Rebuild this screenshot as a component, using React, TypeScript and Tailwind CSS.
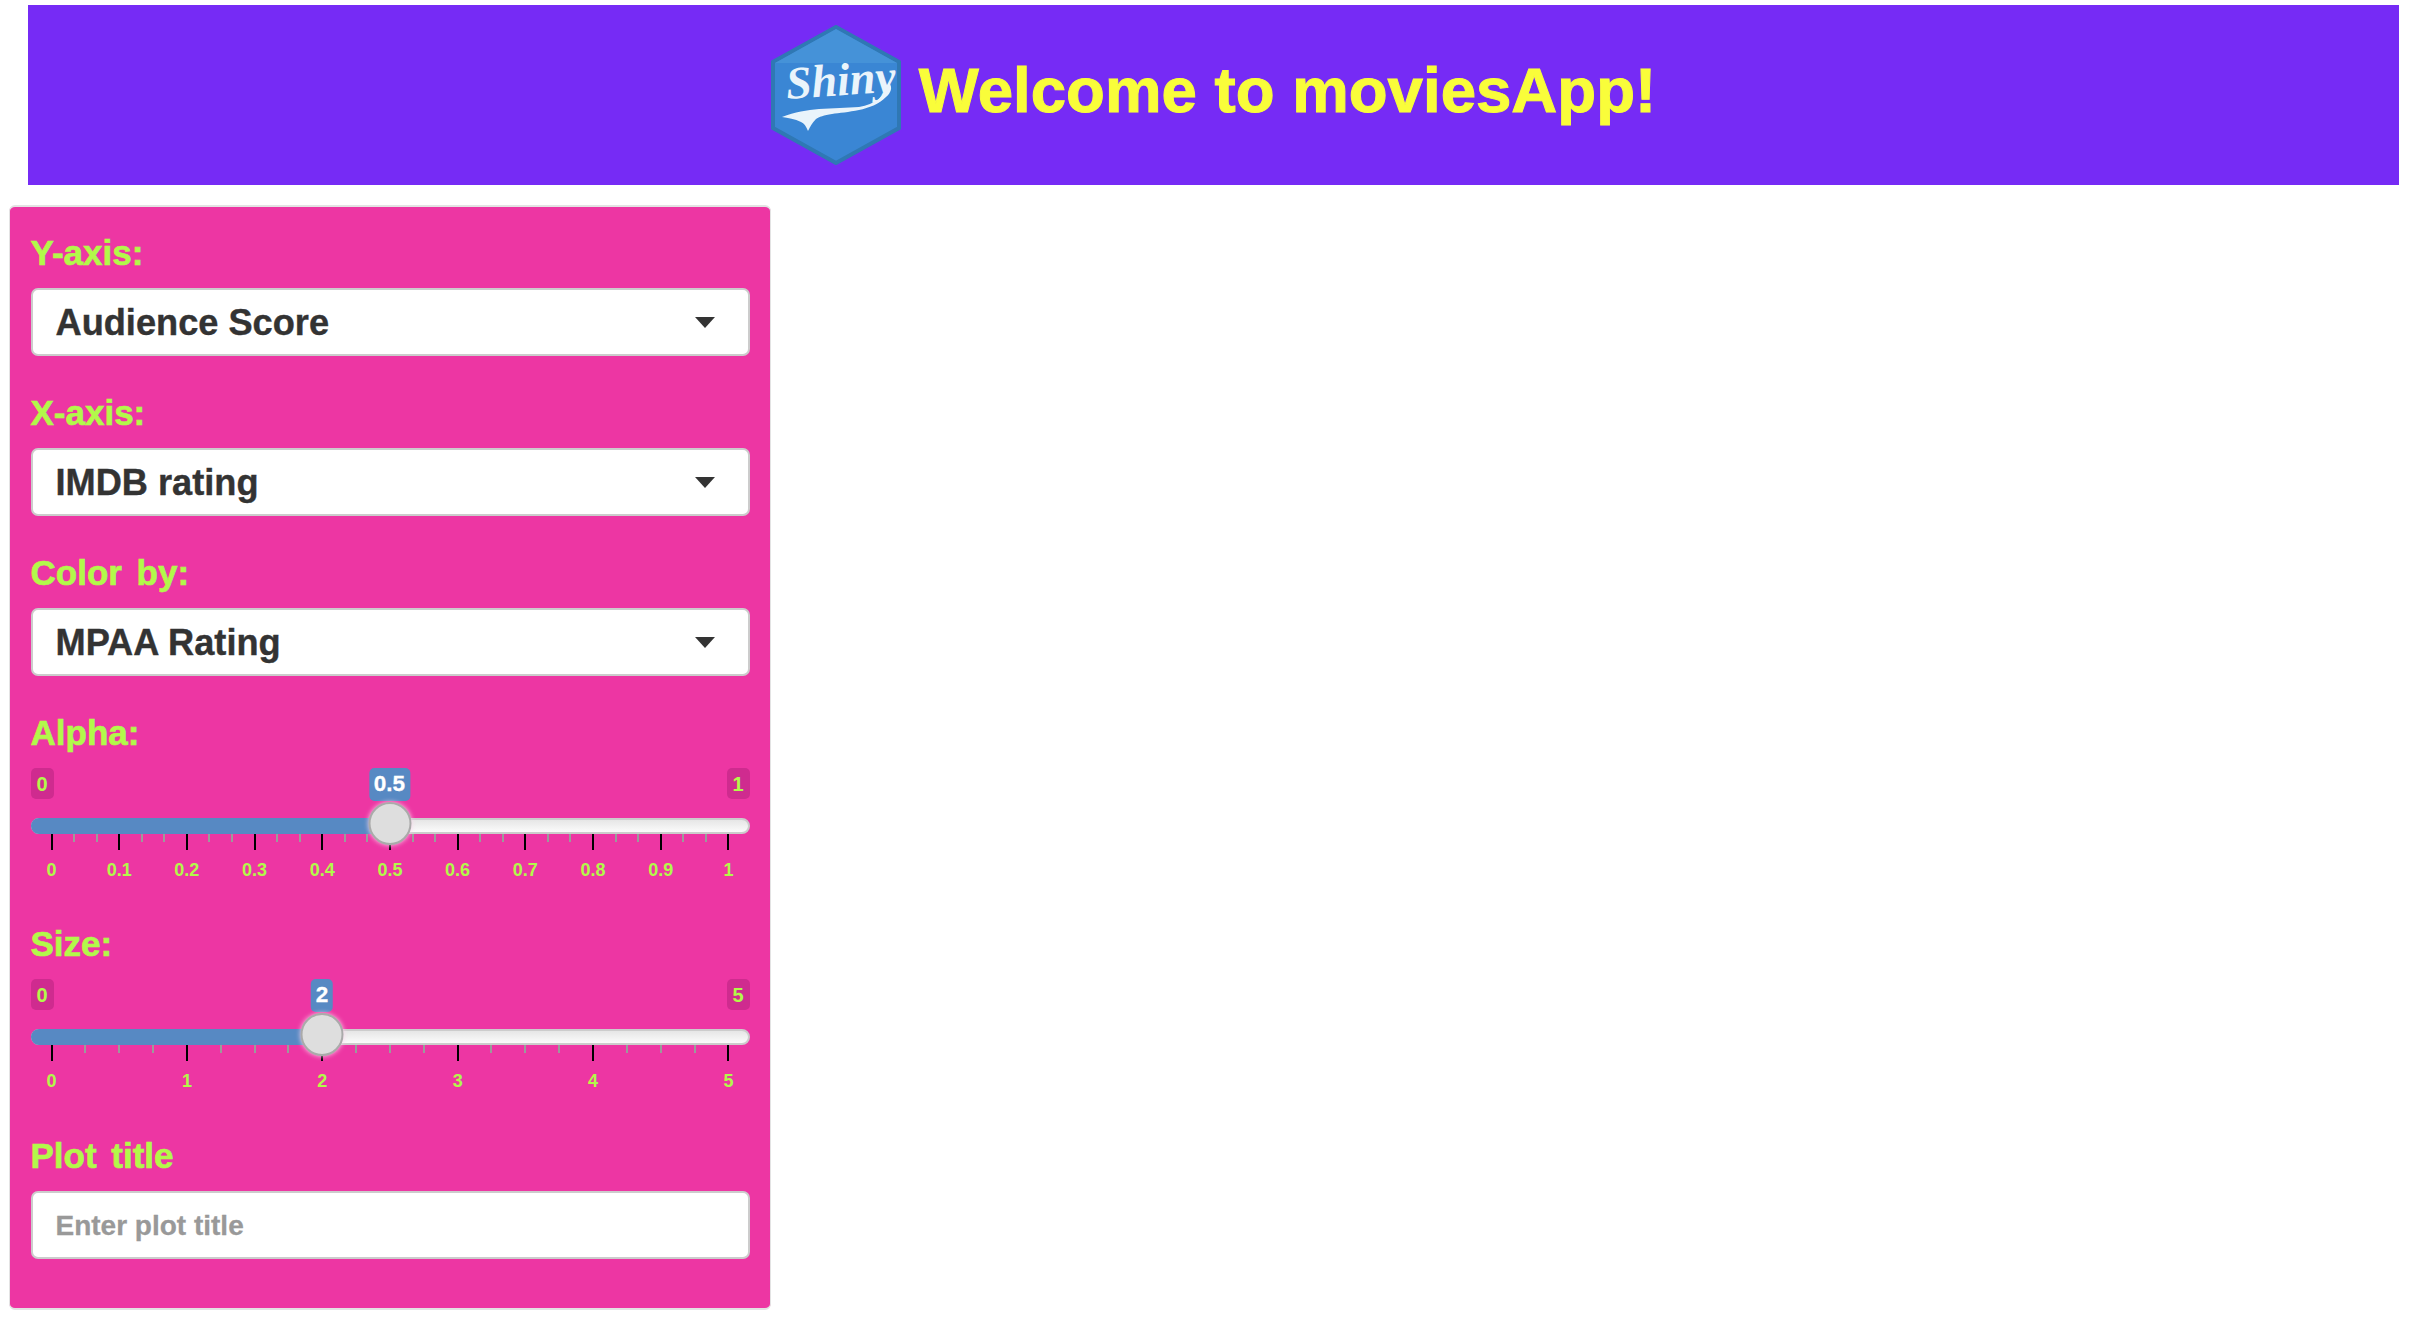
import React from "react";

const fieldLabel =
  "block h-[40px] text-[35px] font-bold leading-[40px] text-[#b2f94a] [-webkit-text-stroke:0.6px] [word-spacing:5px]";

function ShinyLogo() {
  return (
    <svg width="130" height="140" viewBox="0 0 130 140" className="shrink-0">
      <polygon
        points="65,2 128,37 128,103 65,138 2,103 2,37"
        fill="#3a86d4"
        stroke="#2f78b4"
        strokeWidth="4"
      />
      <polygon points="65,4 126,38 4,38" fill="#4592d8" />
      <text
        x="16"
        y="74"
        fontFamily="'Liberation Serif', serif"
        fontStyle="italic"
        fontWeight="700"
        fontSize="46"
        fill="#eaf4fb"
        transform="rotate(-4 16 74)"
      >
        Shiny
      </text>
      <path
        d="M11 92C24 87 36 85 48 84C62 83 76 83 88 82C104 79 114 72 118 58C122 62 120 68 115 72C108 79 98 83 88 85C78 87 68 88 61 89C53 90 48 92 45 94C41 98 39 102 37 106C35 101 33 98 30 97C24 94 17 93 11 92Z"
        fill="#eaf4fb"
      />
    </svg>
  );
}

function SelectBox({ value }: { value: string }) {
  return (
    <div className="mb-[37px] mt-[15px] flex h-[68px] items-center justify-between rounded-[7px] border-2 border-[#cccccc] bg-white pl-[23px] pr-[33px]">
      <span className="pt-[2px] text-[36.2px] font-bold leading-none text-[#333333] [-webkit-text-stroke:0.4px]">
        {value}
      </span>
      <span className="h-0 w-0 border-x-[10px] border-t-[11px] border-x-transparent border-t-[#333333]"></span>
    </div>
  );
}

type SliderProps = {
  min: string;
  max: string;
  value: string;
  percent: number;
  labels: string[];
  perMajor: number;
  className: string;
};

function Slider({ min, max, value, percent, labels, perMajor, className }: SliderProps) {
  const tickCount = (labels.length - 1) * perMajor + 1;
  const center = 21 + (676 * percent) / 100;
  return (
    <div className={"relative " + className}>
      {/* min and max badges */}
      <div className="flex h-[31px] justify-between">
        <span className="flex w-[23px] items-center justify-center rounded-[5px] bg-[#cf2b8f] text-[20px] font-bold text-[#b2f94a]">
          {min}
        </span>
        <span className="flex w-[23px] items-center justify-center rounded-[5px] bg-[#cf2b8f] text-[20px] font-bold text-[#b2f94a]">
          {max}
        </span>
      </div>

      {/* track */}
      <div className="relative mt-[19px] h-[16px] rounded-full border-2 border-[#cccccc] bg-linear-to-b from-[#e6e6e6] to-[#fbfbfb]">
        <div
          className="absolute -bottom-[2px] -left-[2px] -top-[2px] rounded-l-full bg-[#5789c3]"
          style={{ width: center }}
        ></div>
      </div>

      {/* value badge */}
      <span
        className="absolute top-0 flex h-[33px] -translate-x-1/2 items-center justify-center rounded-[5px] bg-[#5789c3] px-[5px] text-[22.5px] font-bold leading-none text-white [-webkit-text-stroke:0.3px]"
        style={{ left: center }}
      >
        {value}
      </span>

      {/* handle */}
      <span
        className="absolute top-[34px] h-[43px] w-[43px] -translate-x-1/2 rounded-full border-2 border-[#aaaaaa] bg-[#dedede] shadow-[0_0_5px_#f8d4ea]"
        style={{ left: center }}
      ></span>

      {/* ticks */}
      <div className="mx-[20px] flex h-[16px] justify-between">
        {Array.from({ length: tickCount }).map((_, i) =>
          i % perMajor === 0 ? (
            <span key={i} className="h-[16px] w-[2px] bg-black"></span>
          ) : (
            <span key={i} className="h-[8px] w-[2px] bg-[#9b9b9b]"></span>
          )
        )}
      </div>

      {/* tick labels */}
      <div className="mx-[21px] mt-[10px] flex justify-between">
        {labels.map((l) => (
          <span key={l} className="flex w-0 justify-center text-[18px] font-bold leading-[20px] text-[#b2f94a]">
            {l}
          </span>
        ))}
      </div>
    </div>
  );
}

export default function App() {
  return (
    <main className="min-h-[1319px] bg-white pt-[5px] font-['Liberation_Sans',Arial,sans-serif]">
      {/* Title bar */}
      <header className="ml-[28px] mr-[10px] flex h-[180px] items-center justify-center gap-[18px] bg-[#762bf5]">
        <ShinyLogo />
        <h1 className="pb-[10px] text-[63.6px] font-bold leading-none text-[#f9fd3a] [-webkit-text-stroke:1px]">
          Welcome to moviesApp!
        </h1>
      </header>

      {/* Sidebar */}
      <section className="ml-[9px] mt-[20px] h-[1105px] w-[762px] rounded-[6px] border-x border-y-2 border-[#e3e3e3] bg-[#ed36a3] px-[20.5px] pt-[26px]">
        <label className={fieldLabel}>Y-axis:</label>
        <SelectBox value="Audience Score" />

        <label className={fieldLabel}>X-axis:</label>
        <SelectBox value="IMDB rating" />

        <label className={fieldLabel}>Color by:</label>
        <SelectBox value="MPAA Rating" />

        <label className={fieldLabel}>Alpha:</label>
        <Slider
          className="mb-[37px] mt-[15px] h-[119px]"
          min="0"
          max="1"
          value="0.5"
          percent={50}
          perMajor={3}
          labels={["0", "0.1", "0.2", "0.3", "0.4", "0.5", "0.6", "0.7", "0.8", "0.9", "1"]}
        />

        <label className={fieldLabel}>Size:</label>
        <Slider
          className="mb-[38px] mt-[15px] h-[119px]"
          min="0"
          max="5"
          value="2"
          percent={40}
          perMajor={4}
          labels={["0", "1", "2", "3", "4", "5"]}
        />

        <label className={fieldLabel}>Plot title</label>
        <input
          type="text"
          placeholder="Enter plot title"
          className="mt-[15px] block h-[68px] w-full rounded-[7px] border-2 border-[#cccccc] bg-white px-[23px] pt-[2px] text-[28px] font-bold text-[#333333] placeholder:text-[#999999] [-webkit-text-stroke:0.3px]"
        />
      </section>
    </main>
  );
}
